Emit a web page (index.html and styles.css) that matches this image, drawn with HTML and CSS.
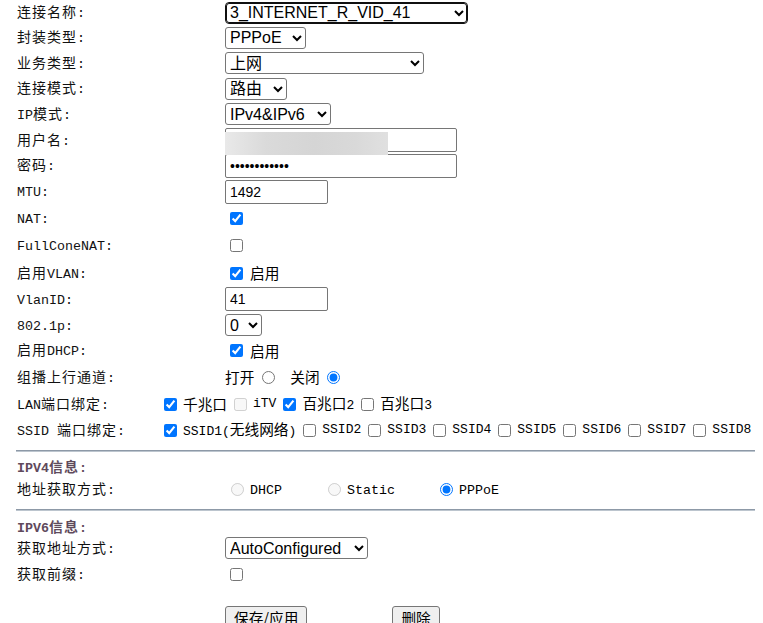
FILE: index.html
```html
<!DOCTYPE html>
<html lang="zh-CN">
<head>
<meta charset="utf-8">
<title>WAN连接配置</title>
<link rel="stylesheet" href="styles.css">
</head>
<body>
<div class="page">
  <div class="form">
    <div class="lbl">连接名称<span class="en">:</span></div>
    <div class="val"><select class="sel w-name focus"><option>3_INTERNET_R_VID_41</option></select></div>

    <div class="lbl">封装类型<span class="en">:</span></div>
    <div class="val"><select class="sel w-mode"><option>PPPoE</option><option>IPoE</option></select></div>

    <div class="lbl">业务类型<span class="en">:</span></div>
    <div class="val"><select class="sel w-svc"><option>上网</option><option>TR069,INTERNET</option></select></div>

    <div class="lbl">连接模式<span class="en">:</span></div>
    <div class="val"><select class="sel w-route"><option>路由</option><option>桥接</option></select></div>

    <div class="lbl"><span class="en">IP</span>模式<span class="en">:</span></div>
    <div class="val"><select class="sel w-ip"><option>IPv4&amp;IPv6</option><option>IPv4</option><option>IPv6</option></select></div>

    <div class="lbl">用户名<span class="en">:</span></div>
    <div class="val"><span class="blurwrap"><input class="txt w-long" type="text" value="user"><span class="blur"></span></span></div>

    <div class="lbl">密码<span class="en">:</span></div>
    <div class="val"><input class="txt w-long" type="password" value="123456789012"></div>

    <div class="lbl"><span class="en">MTU:</span></div>
    <div class="val"><input class="txt w-short" type="text" value="1492"></div>

    <div class="lbl"><span class="en">NAT:</span></div>
    <div class="val"><input class="cb" type="checkbox" checked></div>

    <div class="lbl"><span class="en">FullConeNAT:</span></div>
    <div class="val"><input class="cb" type="checkbox"></div>

    <div class="lbl">启用<span class="en">VLAN:</span></div>
    <div class="val"><input class="cb" type="checkbox" checked><span>启用</span></div>

    <div class="lbl"><span class="en">VlanID:</span></div>
    <div class="val"><input class="txt w-short" type="text" value="41"></div>

    <div class="lbl"><span class="en">802.1p:</span></div>
    <div class="val"><select class="sel w-pri"><option>0</option><option>1</option><option>7</option></select></div>

    <div class="lbl">启用<span class="en">DHCP:</span></div>
    <div class="val"><input class="cb" type="checkbox" checked><span>启用</span></div>

    <div class="lbl">组播上行通道<span class="en">:</span></div>
    <div class="val mc">
      <span>打开</span><input class="rd rd-open" type="radio" name="mc">
      <span>关闭</span><input class="rd rd-close" type="radio" name="mc" checked>
    </div>

    <div class="wide">
      <div class="lbl"><span class="en">LAN</span>端口绑定<span class="en">:</span></div>
      <div class="binds lan">
        <label class="bind"><input class="cb2" type="checkbox" checked><span>千兆口</span></label>
        <label class="bind"><input class="cb2" type="checkbox" disabled><span class="en">iTV</span></label>
        <label class="bind"><input class="cb2" type="checkbox" checked><span>百兆口<span class="en">2</span></span></label>
        <label class="bind"><input class="cb2" type="checkbox"><span>百兆口<span class="en">3</span></span></label>
      </div>
    </div>

    <div class="wide">
      <div class="lbl"><span class="en">SSID </span>端口绑定<span class="en">:</span></div>
      <div class="binds ssid">
        <label class="bind"><input class="cb2" type="checkbox" checked><span><span class="en">SSID1(</span>无线网络<span class="en">)</span></span></label>
        <label class="bind"><input class="cb2" type="checkbox"><span class="en">SSID2</span></label>
        <label class="bind"><input class="cb2" type="checkbox"><span class="en">SSID3</span></label>
        <label class="bind"><input class="cb2" type="checkbox"><span class="en">SSID4</span></label>
        <label class="bind"><input class="cb2" type="checkbox"><span class="en">SSID5</span></label>
        <label class="bind"><input class="cb2" type="checkbox"><span class="en">SSID6</span></label>
        <label class="bind"><input class="cb2" type="checkbox"><span class="en">SSID7</span></label>
        <label class="bind"><input class="cb2" type="checkbox"><span class="en">SSID8</span></label>
      </div>
    </div>

    <div class="rule"></div>

    <div class="head"><span class="en">IPV4</span>信息<span class="en">:</span></div>

    <div class="lbl">地址获取方式<span class="en">:</span></div>
    <div class="val v4">
      <label class="opt"><input class="rd2" type="radio" name="v4" disabled><span class="en4">DHCP</span></label>
      <label class="opt"><input class="rd2" type="radio" name="v4" disabled><span class="en4">Static</span></label>
      <label class="opt"><input class="rd2" type="radio" name="v4" checked><span class="en4">PPPoE</span></label>
    </div>

    <div class="rule"></div>

    <div class="head"><span class="en">IPV6</span>信息<span class="en">:</span></div>

    <div class="lbl">获取地址方式<span class="en">:</span></div>
    <div class="val"><select class="sel w-v6"><option>AutoConfigured</option><option>DHCPv6</option><option>Static</option></select></div>

    <div class="lbl">获取前缀<span class="en">:</span></div>
    <div class="val"><input class="cb" type="checkbox"></div>
  </div>

  <div class="actions">
    <button class="btn" type="button">保存/应用</button>
    <button class="btn" type="button">删除</button>
  </div>
</div>
</body>
</html>
```

FILE: styles.css
```css
html {
  overflow: hidden;
}

html, body {
  margin: 0;
  padding: 0;
  background: #ffffff;
}

body {
  font-family: "Noto Sans CJK SC", sans-serif;
  color: #000000;
}

.page {
  width: 739px;
  padding-left: 16px;
}

.form {
  display: grid;
  grid-template-columns: 208px 1fr;
  grid-template-rows:
    25px 25px 26px 25px 26px 26px 25px 27px
    26px 29px 26px 26px 26px 25px 28px 26px
    26px 15px 18px 26px 16px 18px 24px 28px;
  align-items: center;
}

/* label column */
.lbl {
  padding-left: 1px;
  font-family: "Noto Sans CJK SC", sans-serif;
  font-size: 14px;
  line-height: 17px;
  letter-spacing: 1px;
  white-space: nowrap;
  color: #111111;
}

.lbl .en,
.head .en {
  font-family: "Liberation Mono", monospace;
  font-size: 13.33px;
  letter-spacing: 0;
}

/* value column */
.val {
  display: flex;
  align-items: center;
  font-size: 14.67px;
  line-height: 18px;
  white-space: nowrap;
}

.en {
  font-family: "Liberation Mono", monospace;
  font-size: 13px;
}

/* selects */
.sel {
  box-sizing: border-box;
  height: 22px;
  margin: 0 0 0 1px;
  font-family: "Liberation Sans", "Noto Sans CJK SC", sans-serif;
  font-size: 16px;
  color: #000000;
  background: #ffffff;
  border: 1px solid #767676;
  border-radius: 3px;
}

.sel.focus {
  border-color: #101010;
  border-radius: 4px;
  outline: 1px solid #101010;
  outline-offset: -2px;
}

.w-name { width: 243px; }
.w-mode { width: 81px; }
.w-svc { width: 199px; }
.w-route { width: 62px; }
.w-ip { width: 106px; }
.w-pri { width: 37px; }
.w-v6 { width: 143px; }

/* text inputs */
.txt {
  box-sizing: border-box;
  height: 24px;
  margin: 0 0 0 1px;
  padding: 1px 4px;
  font-family: "Liberation Sans", sans-serif;
  font-size: 14px;
  color: #000000;
  background: #ffffff;
  border: 1px solid #767676;
  border-radius: 2px;
}

.w-long { width: 232px; }
.w-short { width: 103px; }

.blurwrap {
  position: relative;
  display: inline-flex;
}

.blur {
  position: absolute;
  left: 1px;
  top: 4px;
  width: 163px;
  height: 23px;
  background: linear-gradient(90deg, #e9e9e9 0%, #dadada 25%, #d5d5d5 55%, #d9d9d9 80%, #e0e0e0 100%);
}

/* checkboxes */
.cb {
  width: 13px;
  height: 13px;
  margin: 0 7px 0 6px;
}

/* multicast radios */
.mc {
  padding-left: 1px;
}

.rd {
  width: 13px;
  height: 13px;
}

.rd-open {
  margin: 0 15px 0 8px;
}

.rd-close {
  margin: 0 0 0 7px;
}

/* wide binding rows */
.wide {
  grid-column: 1 / -1;
  display: flex;
  align-items: center;
}

.wide .lbl {
  width: 147px;
}

.binds {
  display: flex;
  align-items: center;
  font-size: 14.67px;
  line-height: 18px;
  white-space: nowrap;
}

.binds.lan { gap: 7px; }
.binds.ssid { gap: 7px; }

.bind {
  display: flex;
  align-items: center;
}

.cb2 {
  width: 13px;
  height: 13px;
  margin: 0 6px 0 0;
}

/* section rules and headers */
.rule {
  grid-column: 1 / -1;
  height: 0;
  border-top: 1px solid #8d99a7;
  border-bottom: 1px solid #bcc5ce;
}

.head {
  grid-column: 1 / -1;
  padding-left: 1px;
  font-family: "Noto Sans CJK SC", sans-serif;
  font-size: 14px;
  line-height: 17px;
  letter-spacing: 1px;
  font-weight: bold;
  color: #604a5c;
}

.head .en {
  font-weight: bold;
}

/* ipv4 radios */
.v4 {
  display: grid;
  grid-template-columns: 97px 112px auto;
  padding-left: 7px;
}

.opt {
  display: flex;
  align-items: center;
}

.rd2 {
  width: 13px;
  height: 13px;
  margin: 0 6px 0 0;
}

.en4 {
  font-family: "Liberation Mono", monospace;
  font-size: 13.33px;
  padding-top: 3px;
}

/* buttons */
.actions {
  display: flex;
  gap: 85px;
  padding: 18px 0 0 209px;
}

.btn {
  margin: 0;
  padding: 1px 8px;
  font-family: "Noto Sans CJK SC", sans-serif;
  font-size: 14.67px;
  line-height: 20px;
  color: #000000;
  background: #efefef;
  border: 1px solid #767676;
  border-radius: 3px;
}
```
